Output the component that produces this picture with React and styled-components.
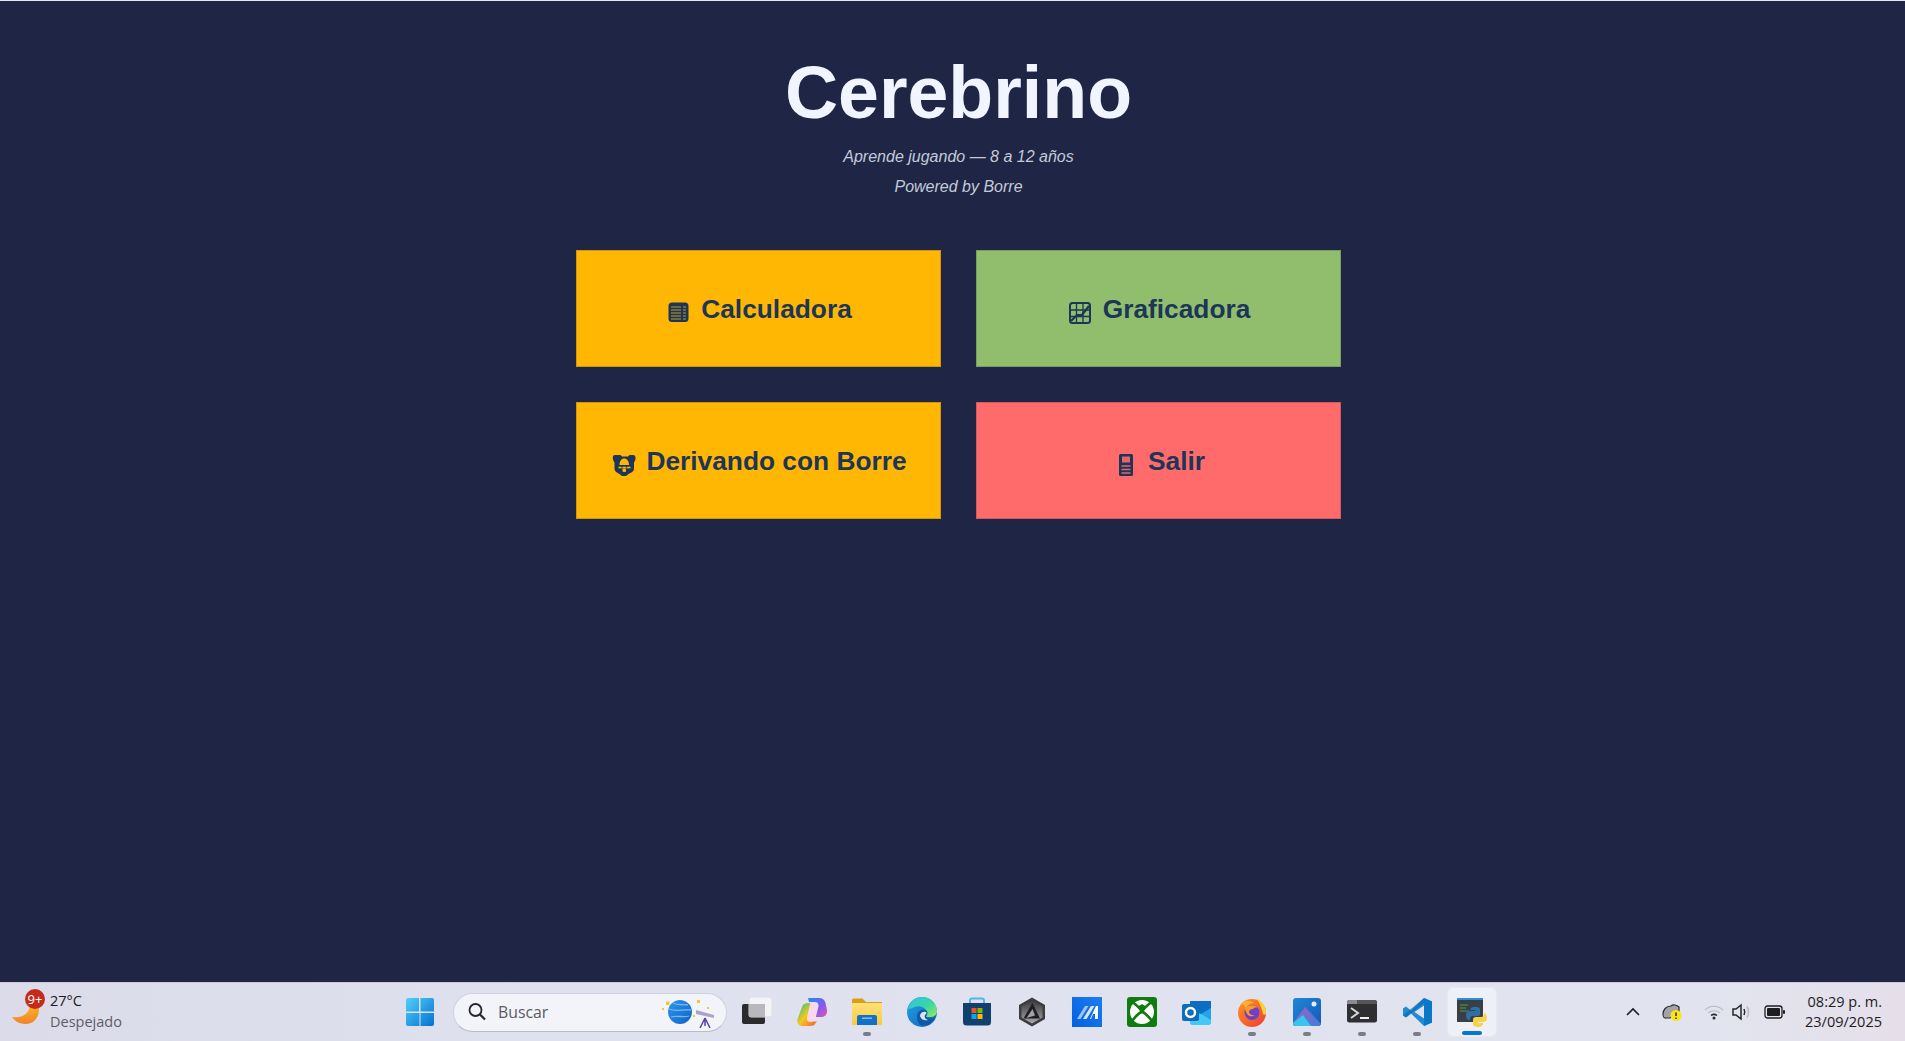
import React from "react";
import styled, { createGlobalStyle } from "styled-components";

const Global = createGlobalStyle`
  html, body { margin: 0; padding: 0; height: 100%; }
  #root { height: 100%; }
`;

const Page = styled.div`
  box-sizing: border-box;
  height: 1041px;
  display: flex;
  flex-direction: column;
  background: #1f2645;
  border-top: 1px solid #e8e8ee;
  font-family: "Liberation Sans", Arial, sans-serif;
  overflow: hidden;
`;

const Main = styled.main`
  flex: 1;
  display: flex;
  flex-direction: column;
  align-items: center;
  padding: 47px 0 0 12px;
`;

const Title = styled.h1`
  margin: 0 0 4px;
  font-size: 73.5px;
  line-height: 90px;
  font-weight: 700;
  color: #f1f5ff;
`;

const Tagline = styled.p`
  margin: 0;
  font-size: 16px;
  line-height: 30px;
  font-style: italic;
  color: #c3cad9;
`;

const Menu = styled.div`
  display: grid;
  grid-template-columns: 365px 365px;
  grid-auto-rows: 117px;
  gap: 35px;
  margin-top: 48px;
`;

const MenuButton = styled.button`
  box-sizing: border-box;
  display: flex;
  align-items: center;
  justify-content: center;
  gap: 7px;
  padding: 2px 0 0;
  background: ${(p) => p.$bg};
  border: 1px solid rgba(31, 38, 69, 0.22);
  color: #1d3557;
  font-family: inherit;
  font-size: 26.3px;
  font-weight: 700;
`;

const Glyph = styled.svg`
  width: 29px;
  height: 29px;
  flex: none;
  fill: none;
  stroke: #1d3557;
`;

const Taskbar = styled.footer`
  box-sizing: border-box;
  height: 59px;
  flex: none;
  display: flex;
  align-items: center;
  background: linear-gradient(90deg, #dbdbe9 0%, #dfe1ee 30%, #e0e3ef 60%, #e1e4ee 90%, #e6dfea 100%);
  border-top: 1px solid #c9cbdb;
  font-family: "Open Sans", "Noto Sans", sans-serif;
  color: #1c1c22;
`;

const Weather = styled.div`
  position: relative;
  width: 392.5px;
  flex: none;
  display: flex;
  align-items: center;
  gap: 9px;
  padding-left: 11px;
  box-sizing: border-box;
`;

const Badge = styled.span`
  position: absolute;
  left: 25px;
  top: -2px;
  width: 20px;
  height: 20px;
  border-radius: 50%;
  background: #c42b1c;
  color: #fff;
  font-size: 13px;
  line-height: 20px;
  text-align: center;
`;

const WeatherText = styled.div`
  display: flex;
  flex-direction: column;
  font-size: 14.5px;
  line-height: 20.5px;
  padding-bottom: 1px;
`;

const Muted = styled.span`
  color: #5c5c68;
`;

const Slot = styled.div`
  position: relative;
  width: 55px;
  height: 48px;
  flex: none;
  display: flex;
  align-items: center;
  justify-content: center;
  &::before {
    content: "";
    display: ${(p) => (p.$active ? "block" : "none")};
    position: absolute;
    left: 3px;
    right: 4px;
    top: 0;
    bottom: 0;
    border-radius: 5px;
    background: #eef0f7;
    box-shadow: 0 0 0 1px #e6e8f1;
  }
  &::after {
    content: "";
    display: ${(p) => (p.$active || p.$running ? "block" : "none")};
    position: absolute;
    bottom: ${(p) => (p.$active ? "1px" : "0")};
    left: 50%;
    transform: translateX(-50%);
    width: ${(p) => (p.$active ? "20px" : "8px")};
    height: 4px;
    border-radius: 2px;
    background: ${(p) => (p.$active ? "#0a74d4" : "#7a7c88")};
  }
  svg {
    position: relative;
    z-index: 1;
  }
`;

const Search = styled.div`
  box-sizing: border-box;
  width: 274px;
  height: 39px;
  flex: none;
  margin: 0 2.5px 0 5.5px;
  display: flex;
  align-items: center;
  gap: 11px;
  padding: 0 0 0 13px;
  border-radius: 20px;
  background: #f3f4fa;
  border: 1px solid #d0d1e0;
  border-bottom-color: #b9bacb;
  font-size: 15.8px;
  color: #5a5a64;
`;

const SearchArt = styled.svg`
  margin-left: auto;
  margin-right: 8px;
`;

const Tray = styled.div`
  flex: 1;
  display: flex;
  align-items: center;
  justify-content: flex-end;
  padding-right: 23px;
`;

const TrayIcon = styled.svg`
  flex: none;
  margin-right: ${(p) => p.$gap}px;
`;

const Clock = styled.div`
  display: flex;
  flex-direction: column;
  align-items: flex-end;
  font-size: 14.5px;
  line-height: 20px;
  color: #1c1c22;
`;

const AbacusGlyph = () => (
  <Glyph viewBox="0 0 29 29">
    <rect x="3.500" y="7.500" width="20" height="19.500" rx="3.500" fill="#1d3557" stroke="none" />
    <path d="M6 12h15M6 15h15M6 18h15M6 21h15M6 24h15" stroke="#c79a1c" strokeWidth="1" />
    <path d="M17 9v17" stroke="#1d3557" strokeWidth="2" />
  </Glyph>
);

const ChartGlyph = () => (
  <Glyph viewBox="0 0 29 29">
    <rect x="3" y="8" width="20" height="20" rx="2.500" strokeWidth="2" />
    <path d="M3 15h20M3 21.500h20M9.500 8v20M16 8v20" strokeWidth="1.300" />
    <path d="M4 26l6-6 5 0 7-9" strokeWidth="2.200" />
  </Glyph>
);

const DogGlyph = () => (
  <Glyph viewBox="0 0 29 29">
    <path d="M5 8h5.500l1.500 1.500h6L19.500 8H23c2 0 2.500 1.500 2.500 3 0 2-1 3.500-1.500 4.500V22c0 2-3 4-5.500 5L16 29h-4l-2.500-2C7 26 4.500 24 4.500 22v-6.500C4 14.500 2.800 13 2.800 11c0-1.500.2-3 2.200-3z" fill="#1d3557" stroke="none" />
    <path d="M9.500 18c0-4 2-6.500 4.700-6.500S19 14 19 18z" fill="#ffb703" stroke="none" />
    <path d="M8.500 20.500h12" stroke="#ffb703" strokeWidth="1.600" />
    <path d="M12 19v1.500M16.500 19v1.500" stroke="#1d3557" strokeWidth="1.500" />
    <rect x="12.500" y="21.500" width="3.500" height="3.500" rx="1" fill="#ffb703" stroke="none" />
  </Glyph>
);

const DoorGlyph = () => (
  <Glyph viewBox="0 0 29 29">
    <rect x="7" y="7" width="14" height="22" rx="1.500" fill="#1d3557" stroke="none" />
    <rect x="10" y="9.500" width="8" height="6" fill="#e8646c" stroke="none" />
    <path d="M9.500 19h9M9.500 22.500h9M9.500 26h9" stroke="#e8646c" strokeWidth="1.400" />
  </Glyph>
);

const Moon = () => (
  <svg width="30" height="30" viewBox="0 0 30 30">
    <defs>
      <linearGradient id="moon" x1="0" y1="0" x2="0" y2="1">
        <stop offset="0" stopColor="#fcb522" />
        <stop offset="1" stopColor="#f0822b" />
      </linearGradient>
    </defs>
    <path d="M1 20c7 1 17-1 17.500-11 .5-1.500 9 0 9.500 2 .5 6-2 12-8 15-7 2.500-15 0-19-6z" fill="url(#moon)" />
  </svg>
);

const WinLogo = () => (
  <svg width="30" height="30" viewBox="0 0 30 30">
    <defs>
      <linearGradient id="win" x1="0" y1="0" x2="1" y2="1">
        <stop offset="0" stopColor="#4fd0fb" />
        <stop offset="1" stopColor="#0571cf" />
      </linearGradient>
    </defs>
    <path d="M1 3a2 2 0 0 1 2-2h11v13.500H1zM15.500 1H27a2 2 0 0 1 2 2v11.500H15.500zM1 16h13.500v13H3a2 2 0 0 1-2-2zM15.500 16H29v11a2 2 0 0 1-2 2H15.500z" fill="url(#win)" />
  </svg>
);

const Magnifier = () => (
  <svg width="20" height="20" viewBox="0 0 20 20" fill="none" stroke="#26262c" strokeWidth="1.800">
    <circle cx="8.500" cy="8" r="6" />
    <path d="M13 12.500l5 5" strokeWidth="2.200" />
  </svg>
);

const PlanetArt = () => (
  <SearchArt width="60" height="34" viewBox="0 0 60 34">
    <defs>
      <linearGradient id="planet" x1="0" y1="0" x2="1" y2="1">
        <stop offset="0" stopColor="#2f97ea" />
        <stop offset="1" stopColor="#1360c4" />
      </linearGradient>
    </defs>
    <circle cx="22" cy="17" r="12" fill="url(#planet)" />
    <path d="M11 14c7 3 14 0 22 1M13 22c7-2 12 1 18-1M15 8c5 3 10 1 15 2" stroke="#6bbcf5" strokeWidth="1.300" fill="none" />
    <path d="M8 6.500h3.500V10H8zM39 5h3v3h-3zM4 13h2v2H4zM35 20h2v2h-2zM49 12h2v2h-2z" fill="#f0c832" />
    <path d="M38 15l18 5v3l-18-4z" fill="#a8a4cc" />
    <path d="M47 23l-5 10M47 23l5 10M47 23v8" stroke="#5a3fa8" strokeWidth="1.500" fill="none" />
  </SearchArt>
);

const TaskView = () => (
  <svg width="32" height="32" viewBox="0 0 32 32">
    <rect x="1" y="8" width="23" height="20" rx="2" fill="#2b2b2d" />
    <rect x="8" y="1" width="23" height="20" rx="2" fill="#f4f4f6" stroke="#dddde4" />
    <rect x="8" y="8" width="16" height="13" fill="#b9b9bd" />
  </svg>
);

const Copilot = () => (
  <svg width="30" height="30" viewBox="0 0 30 30">
    <defs>
      <linearGradient id="cop1" x1="0" y1="0" x2="1" y2="1">
        <stop offset="0" stopColor="#1f8fe8" />
        <stop offset=".55" stopColor="#7a5cf0" />
        <stop offset="1" stopColor="#f04fa8" />
      </linearGradient>
      <linearGradient id="cop2" x1="0" y1="0" x2="1" y2="1">
        <stop offset="0" stopColor="#18c090" />
        <stop offset=".5" stopColor="#f5c81e" />
        <stop offset="1" stopColor="#f25a3a" />
      </linearGradient>
    </defs>
    <path d="M11 1h11c3.500 0 5.500 1.500 6.500 5l1.500 7c.5 4-2 7-6 7h-6l3-12c.5-2-1-3-3-3h-6z" fill="url(#cop1)" />
    <path d="M5 10c1-3 3-4 6-4h2.500L10 21c-.5 2 1 3.500 3 3.500h7l-1 1c-1 2.500-3 3.500-6 3.500H6c-4 0-6.500-3-5.500-7z" fill="url(#cop2)" />
    <path d="M13.500 6H18c2.500 0 4 1 3.500 3.500l-3 12c-.5 2-2 3-4.500 3h-1.500c-1.500 0-3-1-2.500-3.500z" fill="#f8d8ec" />
  </svg>
);

const Explorer = () => (
  <svg width="30" height="30" viewBox="0 0 30 30">
    <defs>
      <linearGradient id="folder" x1="0" y1="0" x2="0" y2="1">
        <stop offset="0" stopColor="#ffe27a" />
        <stop offset="1" stopColor="#fbc93e" />
      </linearGradient>
    </defs>
    <path d="M0 3a1.500 1.500 0 0 1 1.500-1.500h9L14 5h16v3H0z" fill="#d89f12" />
    <rect x="0" y="6" width="30" height="22" rx="1" fill="url(#folder)" />
    <path d="M5 20a2 2 0 0 1 2-2h16a2 2 0 0 1 2 2v8H5z" fill="#1170c8" />
    <rect x="10" y="20.500" width="10" height="1.500" fill="#7fc0f0" />
  </svg>
);

const Edge = () => (
  <svg width="30" height="30" viewBox="0 0 30 30">
    <defs>
      <linearGradient id="edgeA" x1="0" y1="0" x2="1" y2="1">
        <stop offset="0" stopColor="#35bff0" />
        <stop offset=".55" stopColor="#38d8a0" />
        <stop offset="1" stopColor="#9be85a" />
      </linearGradient>
      <linearGradient id="edgeB" x1="0" y1="0" x2="1" y2="1">
        <stop offset="0" stopColor="#22a4e6" />
        <stop offset="1" stopColor="#0f63b4" />
      </linearGradient>
    </defs>
    <circle cx="15" cy="15" r="15" fill="url(#edgeB)" />
    <path d="M1 12C3 4 9 0 15 0c9 0 15 7 15 14 0 4-3 6-7 6h-5c2-1 3-3 2-5-2-5-7-7-12-5-3 1-6 2-7 2z" fill="url(#edgeA)" />
    <path d="M10 20c0-5 3-8 8-7 2 .5 3 2 2 4-1 1-2 3 1 4 3 1 5 .5 7-.5-2 5-7 9-13 8-3-1-5-4-5-8.500z" fill="#0e5aa8" />
    <path d="M13 18c1-3 4-4 6-3 1 1 0 2-1 3-1 2 0 4 3 5-4 1-8-1-8-5z" fill="#e0e3ef" />
  </svg>
);

const Store = () => (
  <svg width="30" height="30" viewBox="0 0 30 30">
    <path d="M8 7V3.500a2 2 0 0 1 2-2h10a2 2 0 0 1 2 2V7" stroke="#4fb6ee" strokeWidth="2" fill="none" />
    <path d="M1 6h28v19a3.500 3.500 0 0 1-3.500 3.500h-21A3.500 3.500 0 0 1 1 25z" fill="#12406e" />
    <rect x="9.500" y="11" width="5" height="5" fill="#f25022" />
    <rect x="15.500" y="11" width="5" height="5" fill="#7fba00" />
    <rect x="9.500" y="17" width="5" height="5" fill="#05a6f0" />
    <rect x="15.500" y="17" width="5" height="5" fill="#ffb900" />
  </svg>
);

const HexApp = () => (
  <svg width="30" height="30" viewBox="0 0 30 30">
    <defs>
      <linearGradient id="hex" x1="0" y1="0" x2="0" y2="1">
        <stop offset="0" stopColor="#3a3a3e" />
        <stop offset="1" stopColor="#a8a8ac" />
      </linearGradient>
    </defs>
    <path d="M15 .5l13 7.500v14l-13 7.500L2 22V8z" fill="#3c3c40" />
    <path d="M15 3.500l10.500 6v11L15 26.500l-10.500-6v-11z" fill="url(#hex)" />
    <path d="M15.500 6L23 21.500H6.500z" fill="#1f1f22" />
    <path d="M15.500 12l2.500 6.500-8.500 2.500z" fill="#a2a2a6" />
  </svg>
);

const MaApp = () => (
  <svg width="30" height="30" viewBox="0 0 30 30">
    <defs>
      <linearGradient id="ma" x1="0" y1="1" x2="1" y2="0">
        <stop offset="0" stopColor="#0360e0" />
        <stop offset="1" stopColor="#1c7df0" />
      </linearGradient>
    </defs>
    <rect width="30" height="30" fill="url(#ma)" />
    <path d="M5 22l8-13h3.500l-8 13z" fill="#9cc6f7" />
    <path d="M11 22l8-13h3.500l-8 13z" fill="#d8e8fb" />
    <path d="M18 22l6-13h2v13h-3v-5h-2l-2 5z" fill="#fff" />
  </svg>
);

const Xbox = () => (
  <svg width="30" height="30" viewBox="0 0 30 30">
    <rect width="30" height="30" rx="3" fill="#107c10" />
    <circle cx="15" cy="15" r="12" fill="#fff" />
    <path d="M5 4.500Q13 11 15 14.500Q17 11 25 4.500M4 25.500Q10 17 15 14.500Q20 17 26 25.500" stroke="#107c10" strokeWidth="2.600" fill="none" />
    <path d="M11 9.500L15 13l4-3.500L15 7z" fill="#107c10" />
  </svg>
);

const Outlook = () => (
  <svg width="30" height="30" viewBox="0 0 30 30">
    <path d="M8 4h18a3 3 0 0 1 3 3v18a3 3 0 0 1-3 3H11a3 3 0 0 1-3-3z" fill="#22a5e8" />
    <path d="M8 4h21v7l-10 6-11-6z" fill="#0a6fc2" />
    <path d="M8 17l11 0 10 6v2a3 3 0 0 1-3 3H11a3 3 0 0 1-3-3z" fill="#50d9ff" opacity=".7" />
    <rect x="0" y="7" width="17" height="17" rx="2" fill="#0b6cc0" />
    <circle cx="8.500" cy="15.500" r="4.500" fill="none" stroke="#fff" strokeWidth="2.500" />
  </svg>
);

const Firefox = () => (
  <svg width="30" height="30" viewBox="0 0 30 30">
    <defs>
      <linearGradient id="ff" x1="0" y1="0" x2="1" y2="1">
        <stop offset="0" stopColor="#ff9a1f" />
        <stop offset="1" stopColor="#ee3a36" />
      </linearGradient>
    </defs>
    <circle cx="15" cy="16" r="14" fill="url(#ff)" />
    <path d="M20 1c4 3 8 7 9 13 1 3-1 5-3 3-1-6-4-11-6-16z" fill="#ffd23a" />
    <path d="M5 6c4-3 9-2 12 0-4 0-7 2-8 5z" fill="#ffb531" />
    <circle cx="15" cy="15.500" r="7.500" fill="#6e3fc8" />
    <path d="M8 11c3-3 9-4 13 0-3-1-4 0-5 1-2 0-4 1-4 3 0 2 3 4 6 3-4 3-9 1-10-7z" fill="#ff9a25" />
  </svg>
);

const Photos = () => (
  <svg width="28" height="28" viewBox="0 0 28 28">
    <defs>
      <linearGradient id="ph" x1="0" y1="0" x2="1" y2="1">
        <stop offset="0" stopColor="#1f88d8" />
        <stop offset="1" stopColor="#1459b8" />
      </linearGradient>
      <linearGradient id="mt" x1="0" y1="0" x2="1" y2="1">
        <stop offset="0" stopColor="#a35ec8" />
        <stop offset="1" stopColor="#3f7fd8" />
      </linearGradient>
    </defs>
    <rect width="28" height="28" rx="3" fill="url(#ph)" />
    <circle cx="21" cy="6" r="2.500" fill="#e8eefa" />
    <path d="M0 25L12 9l16 17v-1 0a3 3 0 0 1-3 3H3a3 3 0 0 1-3-3z" fill="url(#mt)" />
    <path d="M0 25l10-8 8 11H3a3 3 0 0 1-3-3z" fill="#37c5ee" />
  </svg>
);

const Terminal = () => (
  <svg width="30" height="24" viewBox="0 0 30 24">
    <rect width="30" height="22.500" rx="2.500" fill="#2f2f31" />
    <path d="M2.500 0H10v4H0V2.500A2.500 2.500 0 0 1 2.500 0z" fill="#8a8a8c" />
    <path d="M10 0h17.500A2.500 2.500 0 0 1 30 2.500V4H10z" fill="#565658" />
    <path d="M4 8l7 5-7 5" stroke="#d8d8da" strokeWidth="2" fill="none" />
    <path d="M13 18h9" stroke="#f0f0f2" strokeWidth="2" />
  </svg>
);

const VsCode = () => (
  <svg width="31" height="30" viewBox="0 0 31 30">
    <path d="M22 1l8 3.500v21L22 29 9 16.500 4 20.500l-3-2v-7l3-2 5 4z" fill="#1f8ad8" />
    <path d="M22 1l8 3.500v21L22 29z" fill="#0a78c8" />
    <path d="M22 8.500L12.500 15 22 21.500z" fill="#e0e3ef" />
    <path d="M1 18.500l3 2L22 6V1z" fill="#0a68ae" opacity=".6" />
  </svg>
);

const PythonApp = () => (
  <svg width="30" height="30" viewBox="0 0 30 30">
    <rect x="0" y="1" width="26" height="24" fill="#3a3f46" />
    <rect x="0" y="1" width="26" height="2" fill="#2a8fd8" />
    <path d="M3 8h8M3 11h6M3 14h9" stroke="#4aa04a" strokeWidth="1.200" />
    <path d="M13 13c0-2 2-3 4-3h3c2 0 3 1 3 3v4c0 1-1 2-2 2h-5c-2 0-3 1-3 3v1h-1c-2 0-3-2-3-5s2-4 4-4h5v-1z" fill="#2f6fa8" />
    <path d="M28 16c1 1 2 3 2 5 0 3-2 4-4 4h-5v1h5c0 3-2 4-5 4s-5-1-5-3v-4c0-2 1-3 3-3h5c2 0 3-1 3-3v-1z" fill="#f6d24a" />
  </svg>
);

const Chevron = () => (
  <TrayIcon $gap={22} width="14" height="10" viewBox="0 0 14 10" fill="none" stroke="#1c1c22" strokeWidth="1.600">
    <path d="M1 8l6-6 6 6" />
  </TrayIcon>
);

const CloudWarn = () => (
  <TrayIcon $gap={20} width="22" height="20" viewBox="0 0 22 20">
    <path d="M1 12c0-4 3-8 8-8 2-2 6-1 8 1v6l-9 5H3c-1 0-2-2-2-4z" fill="#a3a3a8" stroke="#2b2b30" strokeWidth="1.200" />
    <circle cx="14" cy="13.500" r="5.500" fill="#fbe31a" />
    <path d="M14 10.500v3.500M14 15.500v1.500" stroke="#222" strokeWidth="1.400" />
  </TrayIcon>
);

const Wifi = () => (
  <TrayIcon $gap={8} width="20" height="16" viewBox="0 0 20 16" fill="none" stroke="#b8b9c2" strokeWidth="1.200">
    <path d="M1 6c5-5 13-5 18 0" />
    <path d="M4 9c3.500-3 8.500-3 12 0" />
    <path d="M7 11.500c2-1.500 4-1.500 6 0" stroke="#26262c" strokeWidth="1.500" />
    <circle cx="10" cy="14" r="1.500" fill="#26262c" stroke="none" />
  </TrayIcon>
);

const Volume = () => (
  <TrayIcon $gap={12} width="20" height="18" viewBox="0 0 20 18" fill="none" stroke="#26262c" strokeWidth="1.500">
    <path d="M1 6h3l5-4v14l-5-4H1z" />
    <path d="M12 6c1 2 1 4 0 6" />
    <path d="M15 3.500c2 3 2 8 0 11" stroke="#b8b9c2" />
  </TrayIcon>
);

const Battery = () => (
  <TrayIcon $gap={20} width="21" height="14" viewBox="0 0 21 14">
    <rect x="1" y="1" width="17" height="12" rx="2.500" fill="none" stroke="#1c1c22" strokeWidth="1.300" />
    <rect x="3" y="3" width="13" height="8" rx="1" fill="#1c1c22" />
    <rect x="19" y="5" width="2" height="4" rx="1" fill="#1c1c22" />
  </TrayIcon>
);

const menu = [
  { label: "Calculadora", bg: "#ffb703", Icon: AbacusGlyph },
  { label: "Graficadora", bg: "#90be6d", Icon: ChartGlyph },
  { label: "Derivando con Borre", bg: "#ffb703", Icon: DogGlyph },
  { label: "Salir", bg: "#ff6b6b", Icon: DoorGlyph },
];

const apps = [
  { Icon: TaskView },
  { Icon: Copilot },
  { Icon: Explorer, running: true },
  { Icon: Edge },
  { Icon: Store },
  { Icon: HexApp },
  { Icon: MaApp },
  { Icon: Xbox },
  { Icon: Outlook },
  { Icon: Firefox, running: true },
  { Icon: Photos, running: true },
  { Icon: Terminal, running: true },
  { Icon: VsCode, running: true },
  { Icon: PythonApp, active: true },
];

export default function App() {
  return (
    <Page>
      <Global />
      <Main>
        <Title>Cerebrino</Title>
        <Tagline>Aprende jugando — 8 a 12 años</Tagline>
        <Tagline>Powered by Borre</Tagline>
        <Menu>
          {menu.map(({ label, bg, Icon }) => (
            <MenuButton key={label} $bg={bg}>
              <Icon />
              {label}
            </MenuButton>
          ))}
        </Menu>
      </Main>
      <Taskbar>
        <Weather>
          <Moon />
          <Badge>9+</Badge>
          <WeatherText>
            <span>27°C</span>
            <Muted>Despejado</Muted>
          </WeatherText>
        </Weather>
        <Slot>
          <WinLogo />
        </Slot>
        <Search>
          <Magnifier />
          <span>Buscar</span>
          <PlanetArt />
        </Search>
        {apps.map(({ Icon, running, active }, i) => (
          <Slot key={i} $running={running} $active={active}>
            <Icon />
          </Slot>
        ))}
        <Tray>
          <Chevron />
          <CloudWarn />
          <Wifi />
          <Volume />
          <Battery />
          <Clock>
            <span>08:29 p. m.</span>
            <span>23/09/2025</span>
          </Clock>
        </Tray>
      </Taskbar>
    </Page>
  );
}
